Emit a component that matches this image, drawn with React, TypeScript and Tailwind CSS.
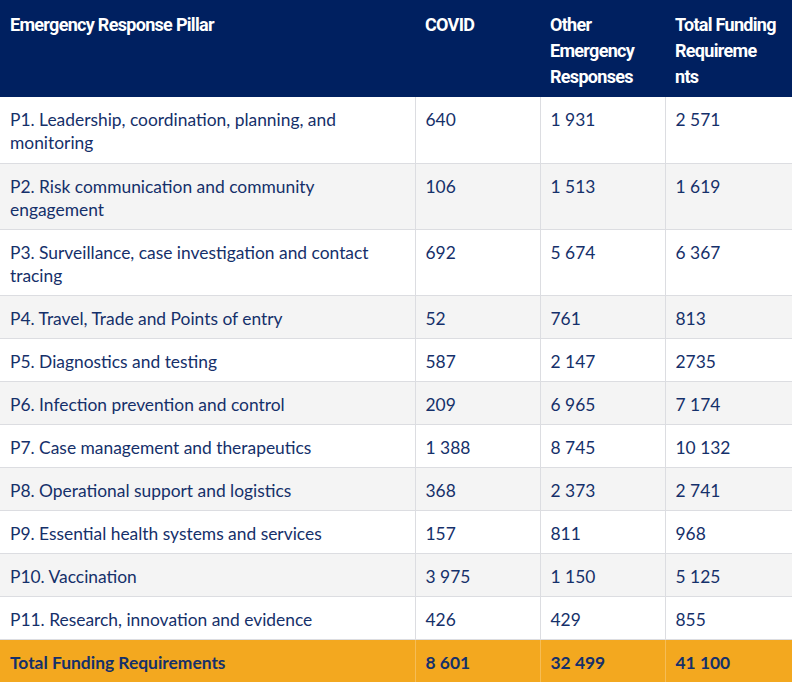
import React from "react";

const rows: [string, string, string, string][] = [
  ["P1. Leadership, coordination, planning, and monitoring", "640", "1 931", "2 571"],
  ["P2. Risk communication and community engagement", "106", "1 513", "1 619"],
  ["P3. Surveillance, case investigation and contact tracing", "692", "5 674", "6 367"],
  ["P4. Travel, Trade and Points of entry", "52", "761", "813"],
  ["P5. Diagnostics and testing", "587", "2 147", "2735"],
  ["P6. Infection prevention and control", "209", "6 965", "7 174"],
  ["P7. Case management and therapeutics", "1 388", "8 745", "10 132"],
  ["P8. Operational support and logistics", "368", "2 373", "2 741"],
  ["P9. Essential health systems and services", "157", "811", "968"],
  ["P10. Vaccination", "3 975", "1 150", "5 125"],
  ["P11. Research, innovation and evidence", "426", "429", "855"],
];

export default function App() {
  return (
    <div className="w-[792px] bg-white" style={{ fontFamily: "Lato, 'Noto Sans', sans-serif" }}>
      <table className="w-[792px] table-fixed border-collapse text-[17.4px] leading-[23px] text-[#15306a]">
        <colgroup>
          <col className="w-[415px]" />
          <col className="w-[125px]" />
          <col className="w-[125px]" />
          <col className="w-[127px]" />
        </colgroup>
        <thead>
          <tr className="h-[97px] bg-[#002060] text-left align-top text-white">
            <th className="pl-[10px] pr-[10px] pt-[12px] text-[18px] font-bold leading-[26px] tracking-[-0.7px]" style={{ fontFamily: "'Roboto', sans-serif" }}>
              Emergency Response Pillar
            </th>
            <th className="pl-[10px] pr-[6px] pt-[12px] text-[18px] font-bold leading-[26px] tracking-[-0.7px]" style={{ fontFamily: "'Roboto', sans-serif" }}>
              COVID
            </th>
            <th className="pl-[10px] pr-[6px] pt-[12px] text-[18px] font-bold leading-[26px] tracking-[-0.7px]" style={{ fontFamily: "'Roboto', sans-serif" }}>
              Other
              <br />
              Emergency
              <br />
              Responses
            </th>
            <th className="pl-[10px] pr-[4px] pt-[12px] text-[18px] font-bold leading-[26px] tracking-[-0.7px]" style={{ fontFamily: "'Roboto', sans-serif" }}>
              Total Funding
              <br />
              Requireme
              <br />
              nts
            </th>
          </tr>
        </thead>
        <tbody>
          {rows.map((r, i) => {
            const h = i < 3 ? "h-[66px]" : "h-[43px]";
            return (
              <tr key={i} className={`${h} align-top ${i % 2 === 1 ? "bg-[#f4f4f4]" : "bg-white"}`}>
                <td className="border-b border-[#dcdde1] pl-[10px] pr-[40px] pt-[11px]">{r[0]}</td>
                <td className="border-b border-l border-[#dcdde1] pl-[10px] pt-[11px]">{r[1]}</td>
                <td className="border-b border-l border-[#dcdde1] pl-[10px] pt-[11px]">{r[2]}</td>
                <td className="border-b border-l border-[#dcdde1] pl-[10px] pt-[11px]">{r[3]}</td>
              </tr>
            );
          })}
          <tr className="h-[43px] bg-[#f3a81f] align-top font-bold">
            <td className="pl-[10px] pt-[11px]">Total Funding Requirements</td>
            <td className="border-l border-[#f6bd55] pl-[10px] pt-[11px]">8 601</td>
            <td className="border-l border-[#f6bd55] pl-[10px] pt-[11px]">32 499</td>
            <td className="border-l border-[#f6bd55] pl-[10px] pt-[11px]">41 100</td>
          </tr>
        </tbody>
      </table>
    </div>
  );
}
